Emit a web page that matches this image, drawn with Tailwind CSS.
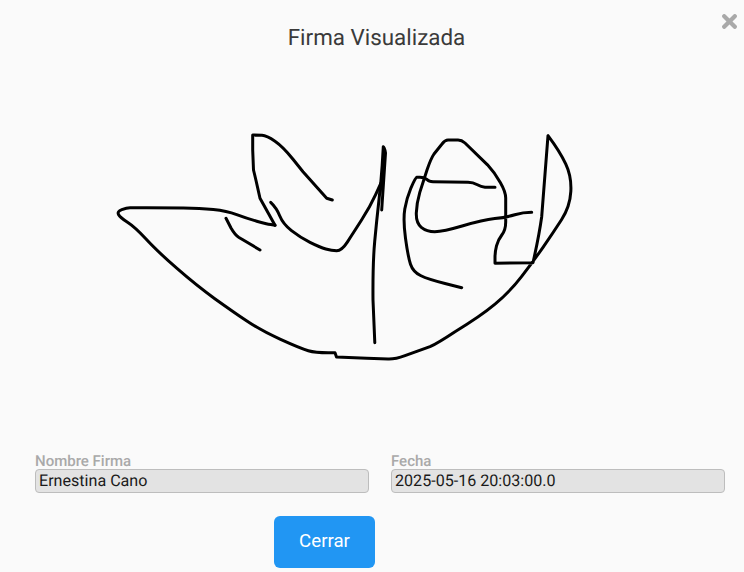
<!DOCTYPE html>
<html lang="es">
<head>
<meta charset="utf-8">
<title>Firma Visualizada</title>
<script src="https://cdn.jsdelivr.net/npm/@tailwindcss/browser@4"></script>
</head>
<body class="m-0 bg-[#fafafa]">
<div class="relative w-[744px] h-[572px] overflow-hidden bg-[#fafafa] font-['Roboto',sans-serif] [text-rendering:geometricPrecision]">
  <button aria-label="Cerrar" class="absolute left-[722px] top-[14px] w-[15px] h-[15px] p-0">
    <svg viewBox="0 0 15 15" class="block w-[15px] h-[15px]"><path d="M2.2 2.2 12.8 12.8M12.8 2.2 2.2 12.8" stroke="#a9a9a9" stroke-width="4.2" stroke-linecap="round" fill="none"/></svg>
  </button>
  <h1 class="h-[74px] pl-[9px] pt-[4px] flex items-center justify-center text-[22.4px] font-normal text-[#3a3a3a]">Firma Visualizada</h1>
  <svg viewBox="0 74 744 378" class="block w-[744px] h-[378px]" fill="none" stroke="#000" stroke-width="3" stroke-linejoin="round" stroke-linecap="round">
    <path d="M275,225.3 L270.8,224.6 Q266.7,224 256.7,221.2 Q246.7,218.3 236.7,214.6 Q226.7,211 213.3,209.6 Q200,208.3 183.3,208 Q166.7,207.7 146.7,207.7 L130,207.7 Q126.7,207.7 121.8,209.6 Q117,211.5 118.5,214.5 Q120,217.5 127.5,222.2 Q135,227 145.8,238.8 Q156.7,250.7 176.7,268.2 Q196.7,285.7 214.8,298.7 Q233,311.7 246.5,320.8 Q260,330 280,339.2 Q300,348.3 308.3,350.8 Q316.7,353.3 335,352.7 L336.5,357 L366.7,358.3 L388,359 Q395,359.3 405,355.6 L430,346.7 Q438,343 455,331.7 Q480,316.7 495,304.2 Q510,291.7 521.5,276.7 Q533,261.7 543,247.3 Q553,233 561.5,219.8 Q570,206.7 570.8,191.7 Q571.7,176.7 565.8,164.2 Q560,151.7 548,135.7 L541.7,216.7 Q539,236 533,262.7 L495,263.3 L495,257.5 Q495,251.7 496.5,245.8 Q498,240 501.8,235 Q505.7,230 505.7,222 L505.7,198 Q505.7,191.7 500.3,182.4 Q495,173 487.5,164.8 L465,143 Q461.7,140 458,140 L448,140 Q445,140 442,144 L434,154 Q431,158.3 427,170 L419.8,192.4 Q416.7,203 416.3,213 Q416,223 421.3,227.3 Q426.7,231.7 434.8,231.7 Q443,231.7 463,225.8 Q483,220 494.8,218.6 Q506.7,217.3 514.8,214.8 Q523,212.3 531.7,212.3"/>
    <path d="M495,187.3 L485,187.3 Q481,187 477.4,184.8 Q473,182.3 468,182.3 L433,181.7 Q429,181.7 427,179.5 Q424,177.3 420,177.3 L416.5,177.3 Q415.7,177.3 411,187.8 Q406.7,198.3 404.8,209 Q403,220 405.5,238.3 Q408,256.7 410.5,264.2 Q413,271.7 420.5,275.5 Q428,279.3 445,283.5 L461.7,287.7"/>
    <path d="M374.8,342.7 L373,300 Q372.7,263 374.7,241.5 Q376.7,220 378.8,201.5 Q381,183 382.2,165 L383.3,146.7 Q384.5,147 385.5,153 L381.7,210"/>
    <path d="M381,183 L375.5,194.8 Q370,206.7 361.7,219.8 Q353.3,233 347.5,241.8 Q341.7,250.7 336.7,250.7 Q331.7,250.7 325.8,249 Q320,247.3 310,242.3 Q300,237.3 291.5,230.6 Q283,224 279.8,216 Q276.7,208 270.7,202.3"/>
    <path d="M275,225.3 L260,198.3 Q256,180 253.5,170 L252.7,150 L252.7,135 L262,135.3 Q266.7,135.7 275,141.2 Q283,146.7 293,159.2 L303,171.7 L326.7,198.3 L332.3,200"/>
    <path d="M226,218.3 L231,228 Q235,235 239,237.5 L243.3,240 L260,250"/>
  </svg>
  <div class="flex gap-[22px] pl-[35px] pr-[19px]">
    <label class="block w-[334px]">
      <span class="block h-[17px] leading-[19px] text-[15px] font-medium text-[#a9a9a9]">Nombre Firma</span>
      <span class="block h-[24px] leading-[22px] px-[3px] text-[16.1px] text-[#1a1a1a] bg-[#e3e3e3] border border-[#bdbdbd] rounded-[4px]">Ernestina Cano</span>
    </label>
    <label class="block w-[334px]">
      <span class="block h-[17px] leading-[19px] text-[15px] font-medium text-[#a9a9a9]">Fecha</span>
      <span class="block h-[24px] leading-[22px] px-[3px] text-[16.1px] text-[#1a1a1a] bg-[#e3e3e3] border border-[#bdbdbd] rounded-[4px]">2025-05-16 20:03:00.0</span>
    </label>
  </div>
  <div class="pl-[274px] pt-[23px]">
    <button class="block w-[101px] h-[52px] pb-[1px] rounded-[6px] bg-[#2196f3] text-white text-[18.7px]">Cerrar</button>
  </div>
</div>
</body>
</html>
